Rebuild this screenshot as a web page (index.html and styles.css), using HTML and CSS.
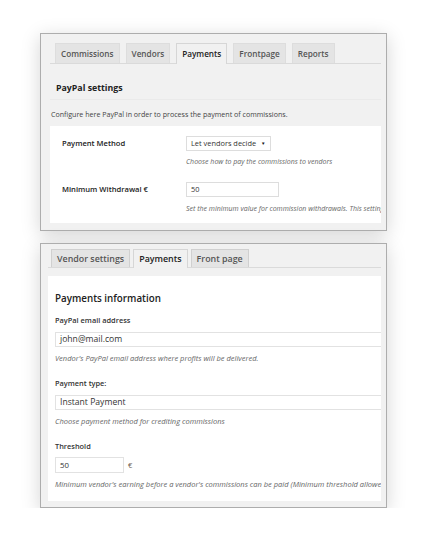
FILE: index.html
```html
<!DOCTYPE html>
<html>
<head>
<meta charset="utf-8">
<link rel="stylesheet" href="styles.css">
</head>
<body>
<div class="page">
  <div class="panel panel-one">
    <div class="tabs tabs-one">
      <div class="tab">Commissions</div>
      <div class="tab">Vendors</div>
      <div class="tab active">Payments</div>
      <div class="tab">Frontpage</div>
      <div class="tab">Reports</div>
    </div>
    <div class="heading-one">PayPal settings</div>
    <div class="intro">Configure here PayPal in order to process the payment of commissions.</div>
    <div class="box box-one">
      <div class="row">
        <div class="row-label">Payment Method</div>
        <div class="row-field">
          <div class="select">Let vendors decide <span class="caret">&#9660;</span></div>
          <div class="desc">Choose how to pay the commissions to vendors</div>
        </div>
      </div>
      <div class="row row-two">
        <div class="row-label">Minimum Withdrawal &euro;</div>
        <div class="row-field">
          <div class="input input-small">50</div>
          <div class="desc desc-second">Set the minimum value for commission withdrawals. This setting will update all vendors</div>
        </div>
      </div>
    </div>
  </div>

  <div class="panel panel-two">
    <div class="tabs tabs-two">
      <div class="tab">Vendor settings</div>
      <div class="tab active">Payments</div>
      <div class="tab">Front page</div>
    </div>
    <div class="box box-two">
      <div class="heading-two">Payments information</div>
      <div class="field-label">PayPal email address</div>
      <div class="input input-wide">john@mail.com</div>
      <div class="desc2">Vendor's PayPal email address where profits will be delivered.</div>
      <div class="field-label gap">Payment type:</div>
      <div class="input input-wide">Instant Payment</div>
      <div class="desc2">Choose payment method for crediting commissions</div>
      <div class="field-label gap">Threshold</div>
      <div class="threshold">
        <div class="input input-threshold">50</div>
        <span class="euro">&euro;</span>
      </div>
      <div class="desc2">Minimum vendor's earning before a vendor's commissions can be paid (Minimum threshold allowed is 50)</div>
    </div>
  </div>
</div>
</body>
</html>
```
FILE: styles.css
```css
html, body {
  margin: 0;
  padding: 0;
  background: #ffffff;
}
body {
  font-family: "Open Sans", "Liberation Sans", sans-serif;
  color: #444;
}
.page {
  padding: 33px 0 0 40px;
  display: flex;
  flex-direction: column;
  gap: 12px;
}
.panel {
  width: 347px;
  box-sizing: border-box;
  border: 1px solid #adadad;
  background: #f1f1f1;
  box-shadow: 0 4px 18px rgba(0, 0, 0, 0.17);
  overflow: hidden;
}
.panel-one {
  height: 198px;
  padding: 9px 5px 0 9px;
}
.panel-two {
  height: 265px;
  padding: 5px 5px 0 7px;
}
.tabs {
  display: flex;
  border-bottom: 1px solid #dadada;
  box-sizing: border-box;
}
.tabs-one {
  height: 21px;
  padding-left: 5px;
  gap: 6px;
}
.tabs-two {
  height: 19px;
  padding-left: 3px;
  gap: 3px;
}
.tab {
  box-sizing: border-box;
  height: 20px;
  border: 1px solid #dddddd;
  border-bottom: none;
  background: #e4e4e4;
  color: #555;
  font-size: 8.2px;
  font-weight: 600;
  line-height: 19px;
  padding: 0 5px;
}
.tabs-two .tab {
  height: 18px;
  line-height: 17px;
  font-size: 8.9px;
  padding: 0 5px;
  border-color: #d0d0d0;
}
.tab.active {
  background: #f1f1f1;
  color: #222;
  height: 21px;
  border-color: #d6d6d6;
}
.tabs-two .tab.active {
  height: 19px;
}
.heading-one {
  margin-top: 17px;
  padding-left: 6px;
  font-size: 8.8px;
  font-weight: 700;
  color: #222;
  line-height: 14px;
  padding-bottom: 4px;
  border-bottom: 1px solid #eaeaea;
}
.intro {
  margin-top: 9px;
  padding-left: 1px;
  font-size: 7.1px;
  line-height: 10px;
  color: #444;
  white-space: nowrap;
}
.box {
  background: #ffffff;
  overflow: hidden;
}
.box-one {
  margin-top: 7px;
  height: 97px;
  padding: 10px 0 0 12px;
  box-sizing: border-box;
}
.row {
  display: flex;
}
.row-two {
  margin-top: 15px;
}
.row-label {
  width: 124px;
  flex: none;
  font-size: 7.6px;
  font-weight: 600;
  color: #222;
  line-height: 15px;
}
.row-field {
  flex: 1;
  min-width: 0;
}
.select {
  box-sizing: border-box;
  width: 85px;
  height: 15px;
  border: 1px solid #dddddd;
  font-size: 7.4px;
  line-height: 13px;
  padding-left: 4px;
  color: #333;
  white-space: nowrap;
}
.caret {
  font-size: 4.5px;
  vertical-align: 1px;
  margin-left: 3px;
  color: #111;
}
.input {
  box-sizing: border-box;
  background: #fff;
  border: 1px solid #dddddd;
  color: #333;
  white-space: nowrap;
}
.input-small {
  width: 93px;
  height: 15px;
  font-size: 7.4px;
  line-height: 13px;
  padding-left: 4px;
}
.desc {
  margin-top: 6px;
  font-size: 7px;
  font-style: italic;
  color: #666;
  line-height: 10px;
  white-space: nowrap;
}
.desc-second {
  margin-top: 7px;
}
.box-two {
  margin-top: 8px;
  height: 225px;
  box-sizing: border-box;
  padding: 16px 0 0 7px;
}
.heading-two {
  font-size: 9.8px;
  font-weight: 600;
  color: #222;
  line-height: 14px;
}
.field-label {
  margin-top: 9px;
  font-size: 7.4px;
  font-weight: 600;
  color: #333;
  line-height: 10px;
}
.field-label.gap {
  margin-top: 15px;
}
.input-wide {
  margin-top: 7px;
  width: 340px;
  height: 15px;
  font-size: 8.6px;
  line-height: 13px;
  padding-left: 4px;
  border-color: #e2e2e2;
}
.desc2 {
  margin-top: 6px;
  font-size: 7.5px;
  font-style: italic;
  color: #666;
  line-height: 10px;
  white-space: nowrap;
}
.threshold {
  margin-top: 6px;
  display: flex;
  align-items: center;
  gap: 4px;
}
.input-threshold {
  width: 69px;
  height: 16px;
  font-size: 7.8px;
  line-height: 14px;
  padding-left: 4px;
  border-color: #e2e2e2;
}
.euro {
  font-size: 7.5px;
  color: #6b5a4a;
}
```
